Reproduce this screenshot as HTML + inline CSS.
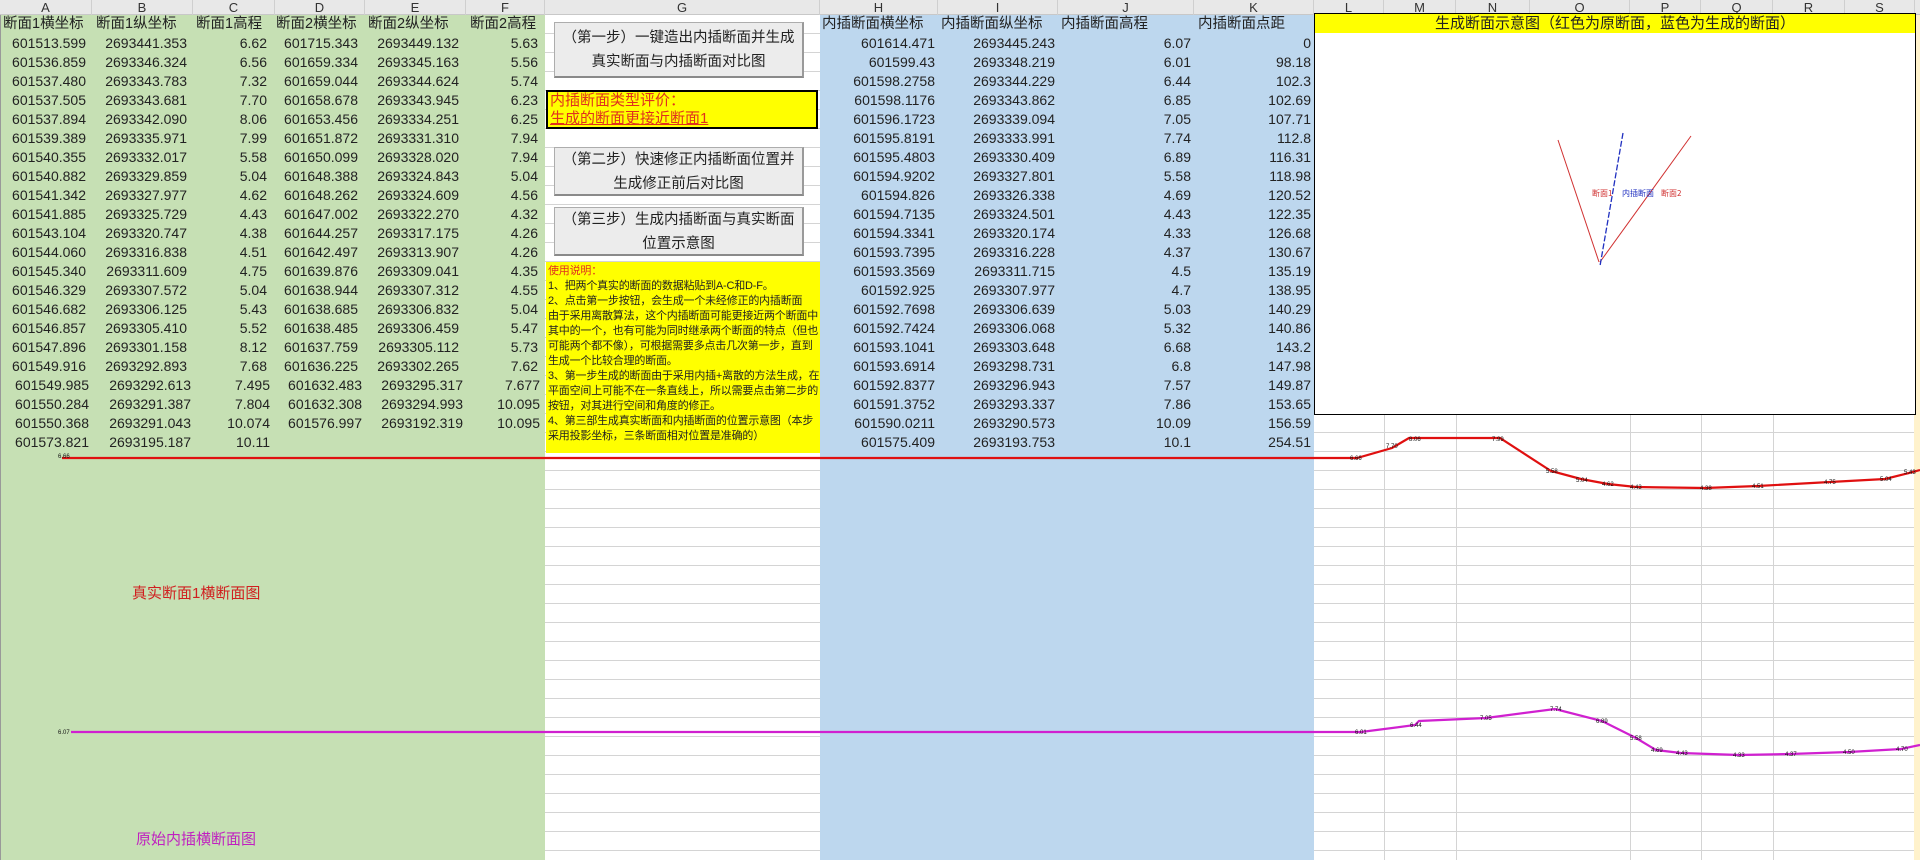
<!DOCTYPE html>
<html><head><meta charset="utf-8">
<style>
*{margin:0;padding:0;box-sizing:border-box}
body{width:1920px;height:860px;overflow:hidden;background:#fff;position:relative;font-family:"Liberation Sans","Noto Sans CJK SC",sans-serif;color:#222}
.abs{position:absolute}
.hdr{position:absolute;top:0;left:0;width:1920px;height:15px;background:#e8e8e8;border-bottom:1px solid #c8c8c8}
.hdr span{position:absolute;top:0;height:15px;font-size:13px;line-height:15px;text-align:center;color:#333;border-right:1px solid #cfcfcf}
.grid{background-image:repeating-linear-gradient(to bottom,transparent 0,transparent 18px,#d4d4d4 18px,#d4d4d4 19px)}
.row{position:absolute;height:19px;font-size:14px;line-height:19px;white-space:nowrap}
.row span{position:absolute;top:0;text-align:right}
.row.h span{text-align:left;font-size:14.5px}
.btn{position:absolute;background:#ececec;border:1px solid #adadad;border-bottom:2px solid #8a8a8a;border-right:2px solid #9a9a9a;font-size:14.5px;line-height:24px;text-align:center;color:#222;white-space:nowrap;font-family:"Liberation Sans","Noto Sans CJK SC",sans-serif}
</style></head><body>

<div class="abs" style="left:0;top:15px;width:545px;height:845px;background:#c6e0b4;border-left:1px solid #999"></div>
<div class="abs grid" style="left:545px;top:15px;width:275px;height:845px;background-position:0 0"></div>
<div class="abs" style="left:820px;top:15px;width:494px;height:845px;background:#bdd7ee"></div>
<div class="abs grid" style="left:1314px;top:15px;width:606px;height:845px"></div>
<div class="abs" style="left:1384px;top:15px;width:1px;height:845px;background:#d4d4d4"></div>
<div class="abs" style="left:1456px;top:15px;width:1px;height:845px;background:#d4d4d4"></div>
<div class="abs" style="left:1630px;top:15px;width:1px;height:845px;background:#d4d4d4"></div>
<div class="abs" style="left:1701px;top:15px;width:1px;height:845px;background:#d4d4d4"></div>
<div class="abs" style="left:1773px;top:15px;width:1px;height:845px;background:#d4d4d4"></div>
<div class="abs" style="left:1914px;top:15px;width:6px;height:845px;background:#fff2cc"></div>

<div class="hdr">
<span style="left:0;width:92px">A</span><span style="left:92px;width:101px">B</span><span style="left:193px;width:82px">C</span><span style="left:275px;width:90px">D</span><span style="left:365px;width:101px">E</span><span style="left:466px;width:79px">F</span><span style="left:545px;width:275px">G</span><span style="left:820px;width:118px">H</span><span style="left:938px;width:120px">I</span><span style="left:1058px;width:136px">J</span><span style="left:1194px;width:120px">K</span><span style="left:1314px;width:70px">L</span><span style="left:1384px;width:72px">M</span><span style="left:1456px;width:74px">N</span><span style="left:1530px;width:100px">O</span><span style="left:1630px;width:71px">P</span><span style="left:1701px;width:72px">Q</span><span style="left:1773px;width:72px">R</span><span style="left:1845px;width:70px">S</span>
</div>

<div class="row h" style="top:15px;left:0"><span style="left:3px">断面1横坐标</span><span style="left:96px">断面1纵坐标</span><span style="left:196px">断面1高程</span><span style="left:276px">断面2横坐标</span><span style="left:368px">断面2纵坐标</span><span style="left:470px">断面2高程</span></div>
<div style="position:absolute;left:0;top:34px">
<div class="row" style="top:0"><span style="right:-86px">601513.599</span><span style="right:-187px">2693441.353</span><span style="right:-267px">6.62</span><span style="right:-358px">601715.343</span><span style="right:-459px">2693449.132</span><span style="right:-538px">5.63</span></div>
<div class="row" style="top:19px"><span style="right:-86px">601536.859</span><span style="right:-187px">2693346.324</span><span style="right:-267px">6.56</span><span style="right:-358px">601659.334</span><span style="right:-459px">2693345.163</span><span style="right:-538px">5.56</span></div>
<div class="row" style="top:38px"><span style="right:-86px">601537.480</span><span style="right:-187px">2693343.783</span><span style="right:-267px">7.32</span><span style="right:-358px">601659.044</span><span style="right:-459px">2693344.624</span><span style="right:-538px">5.74</span></div>
<div class="row" style="top:57px"><span style="right:-86px">601537.505</span><span style="right:-187px">2693343.681</span><span style="right:-267px">7.70</span><span style="right:-358px">601658.678</span><span style="right:-459px">2693343.945</span><span style="right:-538px">6.23</span></div>
<div class="row" style="top:76px"><span style="right:-86px">601537.894</span><span style="right:-187px">2693342.090</span><span style="right:-267px">8.06</span><span style="right:-358px">601653.456</span><span style="right:-459px">2693334.251</span><span style="right:-538px">6.25</span></div>
<div class="row" style="top:95px"><span style="right:-86px">601539.389</span><span style="right:-187px">2693335.971</span><span style="right:-267px">7.99</span><span style="right:-358px">601651.872</span><span style="right:-459px">2693331.310</span><span style="right:-538px">7.94</span></div>
<div class="row" style="top:114px"><span style="right:-86px">601540.355</span><span style="right:-187px">2693332.017</span><span style="right:-267px">5.58</span><span style="right:-358px">601650.099</span><span style="right:-459px">2693328.020</span><span style="right:-538px">7.94</span></div>
<div class="row" style="top:133px"><span style="right:-86px">601540.882</span><span style="right:-187px">2693329.859</span><span style="right:-267px">5.04</span><span style="right:-358px">601648.388</span><span style="right:-459px">2693324.843</span><span style="right:-538px">5.04</span></div>
<div class="row" style="top:152px"><span style="right:-86px">601541.342</span><span style="right:-187px">2693327.977</span><span style="right:-267px">4.62</span><span style="right:-358px">601648.262</span><span style="right:-459px">2693324.609</span><span style="right:-538px">4.56</span></div>
<div class="row" style="top:171px"><span style="right:-86px">601541.885</span><span style="right:-187px">2693325.729</span><span style="right:-267px">4.43</span><span style="right:-358px">601647.002</span><span style="right:-459px">2693322.270</span><span style="right:-538px">4.32</span></div>
<div class="row" style="top:190px"><span style="right:-86px">601543.104</span><span style="right:-187px">2693320.747</span><span style="right:-267px">4.38</span><span style="right:-358px">601644.257</span><span style="right:-459px">2693317.175</span><span style="right:-538px">4.26</span></div>
<div class="row" style="top:209px"><span style="right:-86px">601544.060</span><span style="right:-187px">2693316.838</span><span style="right:-267px">4.51</span><span style="right:-358px">601642.497</span><span style="right:-459px">2693313.907</span><span style="right:-538px">4.26</span></div>
<div class="row" style="top:228px"><span style="right:-86px">601545.340</span><span style="right:-187px">2693311.609</span><span style="right:-267px">4.75</span><span style="right:-358px">601639.876</span><span style="right:-459px">2693309.041</span><span style="right:-538px">4.35</span></div>
<div class="row" style="top:247px"><span style="right:-86px">601546.329</span><span style="right:-187px">2693307.572</span><span style="right:-267px">5.04</span><span style="right:-358px">601638.944</span><span style="right:-459px">2693307.312</span><span style="right:-538px">4.55</span></div>
<div class="row" style="top:266px"><span style="right:-86px">601546.682</span><span style="right:-187px">2693306.125</span><span style="right:-267px">5.43</span><span style="right:-358px">601638.685</span><span style="right:-459px">2693306.832</span><span style="right:-538px">5.04</span></div>
<div class="row" style="top:285px"><span style="right:-86px">601546.857</span><span style="right:-187px">2693305.410</span><span style="right:-267px">5.52</span><span style="right:-358px">601638.485</span><span style="right:-459px">2693306.459</span><span style="right:-538px">5.47</span></div>
<div class="row" style="top:304px"><span style="right:-86px">601547.896</span><span style="right:-187px">2693301.158</span><span style="right:-267px">8.12</span><span style="right:-358px">601637.759</span><span style="right:-459px">2693305.112</span><span style="right:-538px">5.73</span></div>
<div class="row" style="top:323px"><span style="right:-86px">601549.916</span><span style="right:-187px">2693292.893</span><span style="right:-267px">7.68</span><span style="right:-358px">601636.225</span><span style="right:-459px">2693302.265</span><span style="right:-538px">7.62</span></div>
<div class="row" style="top:342px"><span style="right:-89px">601549.985</span><span style="right:-191px">2693292.613</span><span style="right:-270px">7.495</span><span style="right:-362px">601632.483</span><span style="right:-463px">2693295.317</span><span style="right:-540px">7.677</span></div>
<div class="row" style="top:361px"><span style="right:-89px">601550.284</span><span style="right:-191px">2693291.387</span><span style="right:-270px">7.804</span><span style="right:-362px">601632.308</span><span style="right:-463px">2693294.993</span><span style="right:-540px">10.095</span></div>
<div class="row" style="top:380px"><span style="right:-89px">601550.368</span><span style="right:-191px">2693291.043</span><span style="right:-270px">10.074</span><span style="right:-362px">601576.997</span><span style="right:-463px">2693192.319</span><span style="right:-540px">10.095</span></div>
<div class="row" style="top:399px"><span style="right:-89px">601573.821</span><span style="right:-191px">2693195.187</span><span style="right:-270px">10.11</span></div>
</div>

<div class="row h" style="top:15px;left:0"><span style="left:822px">内插断面横坐标</span><span style="left:941px">内插断面纵坐标</span><span style="left:1061px">内插断面高程</span><span style="left:1198px">内插断面点距</span></div>
<div style="position:absolute;left:0;top:34px">
<div class="row" style="top:0"><span style="right:-935px">601614.471</span><span style="right:-1055px">2693445.243</span><span style="right:-1191px">6.07</span><span style="right:-1311px">0</span></div>
<div class="row" style="top:19px"><span style="right:-935px">601599.43</span><span style="right:-1055px">2693348.219</span><span style="right:-1191px">6.01</span><span style="right:-1311px">98.18</span></div>
<div class="row" style="top:38px"><span style="right:-935px">601598.2758</span><span style="right:-1055px">2693344.229</span><span style="right:-1191px">6.44</span><span style="right:-1311px">102.3</span></div>
<div class="row" style="top:57px"><span style="right:-935px">601598.1176</span><span style="right:-1055px">2693343.862</span><span style="right:-1191px">6.85</span><span style="right:-1311px">102.69</span></div>
<div class="row" style="top:76px"><span style="right:-935px">601596.1723</span><span style="right:-1055px">2693339.094</span><span style="right:-1191px">7.05</span><span style="right:-1311px">107.71</span></div>
<div class="row" style="top:95px"><span style="right:-935px">601595.8191</span><span style="right:-1055px">2693333.991</span><span style="right:-1191px">7.74</span><span style="right:-1311px">112.8</span></div>
<div class="row" style="top:114px"><span style="right:-935px">601595.4803</span><span style="right:-1055px">2693330.409</span><span style="right:-1191px">6.89</span><span style="right:-1311px">116.31</span></div>
<div class="row" style="top:133px"><span style="right:-935px">601594.9202</span><span style="right:-1055px">2693327.801</span><span style="right:-1191px">5.58</span><span style="right:-1311px">118.98</span></div>
<div class="row" style="top:152px"><span style="right:-935px">601594.826</span><span style="right:-1055px">2693326.338</span><span style="right:-1191px">4.69</span><span style="right:-1311px">120.52</span></div>
<div class="row" style="top:171px"><span style="right:-935px">601594.7135</span><span style="right:-1055px">2693324.501</span><span style="right:-1191px">4.43</span><span style="right:-1311px">122.35</span></div>
<div class="row" style="top:190px"><span style="right:-935px">601594.3341</span><span style="right:-1055px">2693320.174</span><span style="right:-1191px">4.33</span><span style="right:-1311px">126.68</span></div>
<div class="row" style="top:209px"><span style="right:-935px">601593.7395</span><span style="right:-1055px">2693316.228</span><span style="right:-1191px">4.37</span><span style="right:-1311px">130.67</span></div>
<div class="row" style="top:228px"><span style="right:-935px">601593.3569</span><span style="right:-1055px">2693311.715</span><span style="right:-1191px">4.5</span><span style="right:-1311px">135.19</span></div>
<div class="row" style="top:247px"><span style="right:-935px">601592.925</span><span style="right:-1055px">2693307.977</span><span style="right:-1191px">4.7</span><span style="right:-1311px">138.95</span></div>
<div class="row" style="top:266px"><span style="right:-935px">601592.7698</span><span style="right:-1055px">2693306.639</span><span style="right:-1191px">5.03</span><span style="right:-1311px">140.29</span></div>
<div class="row" style="top:285px"><span style="right:-935px">601592.7424</span><span style="right:-1055px">2693306.068</span><span style="right:-1191px">5.32</span><span style="right:-1311px">140.86</span></div>
<div class="row" style="top:304px"><span style="right:-935px">601593.1041</span><span style="right:-1055px">2693303.648</span><span style="right:-1191px">6.68</span><span style="right:-1311px">143.2</span></div>
<div class="row" style="top:323px"><span style="right:-935px">601593.6914</span><span style="right:-1055px">2693298.731</span><span style="right:-1191px">6.8</span><span style="right:-1311px">147.98</span></div>
<div class="row" style="top:342px"><span style="right:-935px">601592.8377</span><span style="right:-1055px">2693296.943</span><span style="right:-1191px">7.57</span><span style="right:-1311px">149.87</span></div>
<div class="row" style="top:361px"><span style="right:-935px">601591.3752</span><span style="right:-1055px">2693293.337</span><span style="right:-1191px">7.86</span><span style="right:-1311px">153.65</span></div>
<div class="row" style="top:380px"><span style="right:-935px">601590.0211</span><span style="right:-1055px">2693290.573</span><span style="right:-1191px">10.09</span><span style="right:-1311px">156.59</span></div>
<div class="row" style="top:399px"><span style="right:-935px">601575.409</span><span style="right:-1055px">2693193.753</span><span style="right:-1191px">10.1</span><span style="right:-1311px">254.51</span></div>
</div>

<div class="btn" style="left:554px;top:22px;width:250px;height:56px;padding-top:3px">（第一步）一键造出内插断面并生成<br>真实断面与内插断面对比图</div>
<div class="abs" style="left:546px;top:90px;width:272px;height:39px;background:#ffff00;border:2px solid #000;color:#e0301e;font-size:15px;line-height:18px;padding-left:2px">内插断面类型评价：<br><u>生成的断面更接近断面1</u></div>
<div class="btn" style="left:554px;top:147px;width:250px;height:49px;padding-top:0">（第二步）快速修正内插断面位置并<br>生成修正前后对比图</div>
<div class="btn" style="left:554px;top:207px;width:250px;height:49px;padding-top:0">（第三步）生成内插断面与真实断面<br>位置示意图</div>
<div class="abs" style="left:546px;top:262px;width:274px;height:191px;background:#ffff00;font-size:11px;line-height:15px;padding:2px 0 0 2px;white-space:nowrap;color:#222;letter-spacing:-0.2px"><span style="color:#e0301e">使用说明：</span><br>1、把两个真实的断面的数据粘贴到A-C和D-F。<br>2、点击第一步按钮，会生成一个未经修正的内插断面<br>由于采用离散算法，这个内插断面可能更接近两个断面中<br>其中的一个，也有可能为同时继承两个断面的特点（但也<br>可能两个都不像），可根据需要多点击几次第一步，直到<br>生成一个比较合理的断面。<br>3、第一步生成的断面由于采用内插+离散的方法生成，在<br>平面空间上可能不在一条直线上，所以需要点击第二步的<br>按钮，对其进行空间和角度的修正。<br>4、第三部生成真实断面和内插断面的位置示意图（本步<br>采用投影坐标，三条断面相对位置是准确的）</div>

<div class="abs" style="left:1314px;top:13px;width:602px;height:402px;background:#fff;border:1.5px solid #000"></div>
<div class="abs" style="left:1315px;top:14px;width:600px;height:19px;background:#ffff00;font-size:15px;line-height:19px;text-align:center;color:#222">生成断面示意图（红色为原断面，蓝色为生成的断面）</div>
<svg class="abs" style="left:0;top:0" width="1920" height="860">
<line x1="1558" y1="140" x2="1599" y2="262" stroke="#d03030" stroke-width="1"/>
<line x1="1691" y1="136" x2="1600" y2="262" stroke="#d03030" stroke-width="1"/>
<line x1="1623" y1="133" x2="1600" y2="266" stroke="#2030c0" stroke-width="1.3" stroke-dasharray="6,2"/>
<text x="1592" y="196" font-size="8" fill="#d03030" font-family="Noto Sans CJK SC">断面1</text>
<text x="1622" y="196" font-size="8" fill="#2030c0" font-family="Noto Sans CJK SC">内插断面</text>
<text x="1661" y="196" font-size="8" fill="#d03030" font-family="Noto Sans CJK SC">断面2</text>

<polyline fill="none" stroke="#e01010" stroke-width="2.2" points="62,458 1357,458 1392,448 1409,438 1500,438 1551,471 1581,479 1608,484 1636,487 1705,488 1758,486 1830,482 1885,479 1909,473 1920,470"/>
<polyline fill="none" stroke="#d020d0" stroke-width="2.2" points="71,732 1361,732 1415,725 1419,721 1486,718 1555,709 1602,721 1636,738 1656,750 1681,753 1739,755 1790,754 1849,752 1901,749 1920,745"/>
<g font-size="6" fill="#111" font-family="Liberation Sans">
<text x="58" y="458">6.66</text>
<text x="1350" y="460">6.66</text><text x="1386" y="448">7.70</text><text x="1409" y="441">8.06</text><text x="1492" y="441">7.99</text><text x="1546" y="473">5.58</text><text x="1576" y="482">5.04</text><text x="1602" y="486">4.62</text><text x="1630" y="489">4.43</text><text x="1700" y="490">4.38</text><text x="1752" y="488">4.51</text><text x="1824" y="484">4.75</text><text x="1880" y="481">5.04</text><text x="1904" y="474">5.43</text>
<text x="58" y="734">6.07</text>
<text x="1355" y="734">6.01</text><text x="1410" y="727">6.44</text><text x="1480" y="720">7.05</text><text x="1550" y="711">7.74</text><text x="1596" y="723">6.89</text><text x="1630" y="740">5.58</text><text x="1651" y="752">4.69</text><text x="1676" y="755">4.43</text><text x="1733" y="757">4.33</text><text x="1785" y="756">4.37</text><text x="1843" y="754">4.50</text><text x="1896" y="751">4.70</text>
</g>
</svg>
<div class="abs" style="left:132px;top:582px;font-size:15px;color:#d02020;white-space:nowrap">真实断面1横断面图</div>
<div class="abs" style="left:136px;top:828px;font-size:15px;color:#c020c0;white-space:nowrap">原始内插横断面图</div>
</body></html>
